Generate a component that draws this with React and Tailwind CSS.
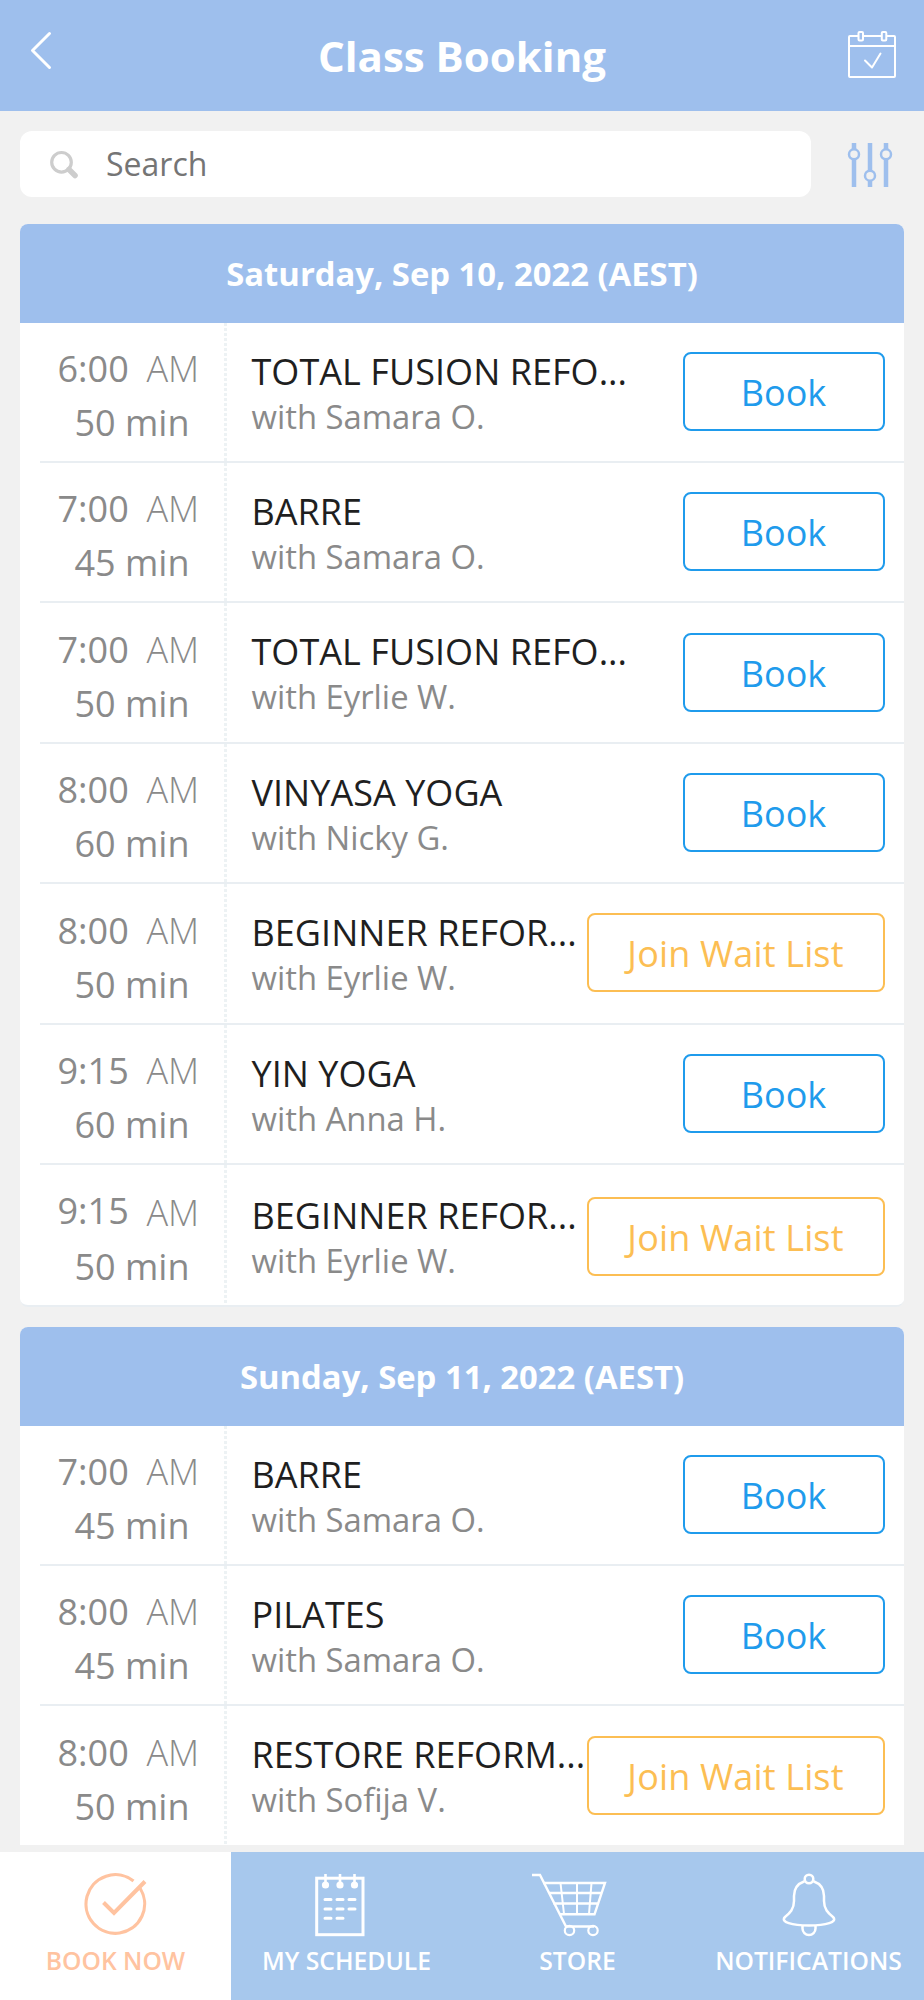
const days = [
  {
    date: "Saturday, Sep 10, 2022 (AEST)",
    classes: [
      { time: "6:00", length: "50 min", title: "TOTAL FUSION REFO...", coach: "Samara O." },
      { time: "7:00", length: "45 min", title: "BARRE", coach: "Samara O." },
      { time: "7:00", length: "50 min", title: "TOTAL FUSION REFO...", coach: "Eyrlie W." },
      { time: "8:00", length: "60 min", title: "VINYASA YOGA", coach: "Nicky G." },
      { time: "8:00", length: "50 min", title: "BEGINNER REFOR...", coach: "Eyrlie W.", full: true },
      { time: "9:15", length: "60 min", title: "YIN YOGA", coach: "Anna H." },
      { time: "9:15", length: "50 min", title: "BEGINNER REFOR...", coach: "Eyrlie W.", full: true, last: true },
    ],
  },
  {
    date: "Sunday, Sep 11, 2022 (AEST)",
    open: true,
    classes: [
      { time: "7:00", length: "45 min", title: "BARRE", coach: "Samara O." },
      { time: "8:00", length: "45 min", title: "PILATES", coach: "Samara O." },
      { time: "8:00", length: "50 min", title: "RESTORE REFORM...", coach: "Sofija V.", full: true },
    ],
  },
];

const BackIcon = () => (
  <svg width="22" height="40" viewBox="0 0 22 40" fill="none" stroke="white" strokeWidth="3" strokeLinecap="round" strokeLinejoin="round">
    <path d="M19.500 2.500 2.500 19.500 19.500 36.500" />
  </svg>
);

const CalendarIcon = () => (
  <svg width="49" height="48" viewBox="0 0 49 48" fill="none" stroke="white" strokeWidth="2" strokeLinejoin="round">
    <path d="M10 5H2a1 1 0 0 0-1 1V45a1 1 0 0 0 1 1H46a1 1 0 0 0 1-1V6a1 1 0 0 0-1-1H38.500M15 5H33.500M1 15H47" />
    <rect x="10.500" y="1" width="4.500" height="8.500" rx="1" />
    <rect x="33.800" y="1" width="4.500" height="8.500" rx="1" />
    <path d="M17 29.500 24 36.500 32.500 22.500" strokeLinecap="round" />
  </svg>
);

const SearchIcon = () => (
  <svg width="30" height="30" viewBox="0 0 30 30" fill="none" stroke="#cdcdcd">
    <circle cx="12.500" cy="13.300" r="9.800" strokeWidth="3.200" />
    <path d="M20 20.500 26 26.500" strokeWidth="5.500" strokeLinecap="round" />
  </svg>
);

const FilterIcon = () => (
  <svg width="46" height="45" viewBox="0 0 46 45" fill="none" stroke="#9ebfed">
    <path d="M7 0V6.500M7 16V44M23 0V28M23 37.500V44M39 0V6.500M39 16V44" strokeWidth="4.500" />
    <g strokeWidth="2.500">
      <circle cx="7" cy="11.300" r="5" />
      <circle cx="23" cy="32.700" r="5" />
      <circle cx="39" cy="11.300" r="5" />
    </g>
  </svg>
);

const CheckIcon = () => (
  <svg width="64" height="64" viewBox="0 0 64 64" fill="none" stroke="#ffc3a0">
    <path d="M49.500 8A29.300 29.300 0 1 0 56.200 15.500" strokeWidth="3.200" />
    <path d="M19.500 29.500 30 40 61 8.500" strokeWidth="4" />
  </svg>
);

const ScheduleIcon = () => (
  <svg width="50" height="64" viewBox="0 0 50 64" fill="none" stroke="white" className="mr-[13px]">
    <rect x="1.700" y="5.200" width="46.300" height="56.500" strokeWidth="3" />
    <path d="M10.500 1V12M25 1V12M39.500 1V12" strokeWidth="2.600" />
    <g fill="white" stroke="none">
      <circle cx="10.500" cy="12" r="3.600" />
      <circle cx="25" cy="12" r="3.600" />
      <circle cx="39.500" cy="12" r="3.600" />
    </g>
    <path d="M10 26.500h6M22 26.500h6M34 26.500h6M10 36h6M22 36h6M34 36h6M10 45.300h6M22 45.300h6" strokeWidth="3" strokeLinecap="round" />
  </svg>
);

const CartIcon = () => (
  <svg width="76" height="64" viewBox="0 0 76 64" fill="none" stroke="white" strokeWidth="2" className="mr-[18px]">
    <path d="M1 2H9L35 53.500H63" strokeWidth="2.400" />
    <path d="M12 10H74L63.500 41.300H29M18 20H70.500M22.500 30.500H67" strokeWidth="2.400" />
    <path d="M29.500 10 33 41M46 10V41M60.500 10 58 41" />
    <circle cx="38.500" cy="57.500" r="4.700" strokeWidth="2.200" />
    <circle cx="62" cy="57.500" r="4.700" strokeWidth="2.200" />
  </svg>
);

const BellIcon = () => (
  <svg width="54" height="64" viewBox="0 0 54 64" fill="none" stroke="white" strokeWidth="2.500">
    <circle cx="27" cy="6" r="4.300" />
    <path d="M22.500 8.300C15 11 12 17 12 23V28C12 36 8 40 3 44C-2 49 10 52.500 27 52.500S56 49 51 44C46 40 42 36 42 28V23C42 17 39 11 31.500 8.300" />
    <path d="M20.500 52.500V55.500a6.500 6.500 0 0 0 13 0V52.500" />
  </svg>
);

const tabs = [
  { label: "BOOK NOW", icon: CheckIcon, active: true },
  { label: "MY SCHEDULE", icon: ScheduleIcon },
  { label: "STORE", icon: CartIcon },
  { label: "NOTIFICATIONS", icon: BellIcon },
];

const ClassRow = ({ item, first }) => (
  <div className={`ml-5 flex bg-white ${first ? "h-[138px]" : "h-[140.4px] border-t-2 border-[#e9eef2]"} ${item.last ? "h-[142px]" : ""}`}>
    {/* Time and duration */}
    <div className="w-[184px] shrink-0 pt-[19.4px] text-[36px] leading-[54px] text-[#8a8a8a]">
      <div className="flex pl-[17.5px]">
        <span className="w-[89px]">{item.time}</span>
        <span className={item.last ? "pt-[2px] font-light" : "font-light"}>AM</span>
      </div>
      <div className="text-center">{item.length}</div>
    </div>

    <div className="w-[3px] shrink-0 bg-[repeating-linear-gradient(to_bottom,#edf2f4_0_3px,#ffffff_3px_5px)]"></div>

    <div className={`min-w-0 flex-1 whitespace-nowrap pl-[24.5px] ${item.last ? "pt-[28px]" : "pt-[26px]"}`}>
      <h3 className="text-[36px] leading-[46px] tracking-[0.04px] text-[#1f1f1f]">{item.title}</h3>
      <p className="text-[32.8px] leading-[44px] text-[#8a8a8a]">with {item.coach}</p>
    </div>

    <button
      className={`mr-[19.5px] h-[79px] shrink-0 rounded-lg border-2 pt-[3px] text-[36px] ${item.last ? "mt-[32px]" : "mt-[29.3px]"} ${
        item.full ? "w-[298px] border-[#fcbe53] tracking-[0.15px] text-[#fcbe53]" : "w-[202px] border-[#1f9bec] text-[#1f9bec]"
      }`}
    >
      {item.full ? "Join Wait List" : "Book"}
    </button>
  </div>
);

const App = () => {
  return (
    <div className="flex h-[2000px] w-[924px] flex-col overflow-hidden bg-[#f1f1f1] font-['Open_Sans',sans-serif]">
      <header className="flex h-[111px] shrink-0 items-start justify-between bg-[#9ebfed] pl-[30px] pr-[27px] pt-[31px]">
        <div className="w-[49px]">
          <BackIcon />
        </div>
        <h1 className="pr-[3px] text-[42px] font-bold leading-[49px] text-white">Class Booking</h1>
        <CalendarIcon />
      </header>

      <div className="flex shrink-0 items-center pb-[27px] pl-5 pr-[31px] pt-5">
        <div className="flex h-[66px] w-[791px] items-center rounded-xl bg-white pl-[29px]">
          <SearchIcon />
          <span className="pl-[27px] text-[32px] leading-[44px] text-[#757575]">Search</span>
        </div>
        <div className="ml-auto pt-[2px]">
          <FilterIcon />
        </div>
      </div>

      <main className="flex min-h-0 flex-1 flex-col gap-5 overflow-hidden px-5">
        {days.map((day) => (
          <section
            key={day.date}
            className={`w-[884px] shrink-0 overflow-hidden bg-white ${day.open ? "rounded-t-lg border-b-2 border-[#f1f1f1]" : "rounded-lg border-b-2 border-[#e9eef2]"}`}
          >
            <h2 className="flex h-[99px] items-center justify-center bg-[#9ebfed] text-[32.8px] font-bold text-white">
              {day.date}
            </h2>
            {day.classes.map((item, index) => (
              <ClassRow key={index} item={item} first={index === 0} />
            ))}
          </section>
        ))}
      </main>

      {/* Bottom tab bar */}
      <nav className="grid h-[148px] shrink-0 grid-cols-4 bg-[#a7c8ed]">
        {tabs.map(({ label, icon: Icon, active }) => (
          <a
            key={label}
            className={`flex flex-col items-center pt-[21px] ${active ? "bg-white text-[#ffc3a0]" : "text-white"}`}
          >
            <Icon />
            <span className="mt-2 text-[24.7px] font-semibold leading-8">{label}</span>
          </a>
        ))}
      </nav>
    </div>
  );
};

export default App;
